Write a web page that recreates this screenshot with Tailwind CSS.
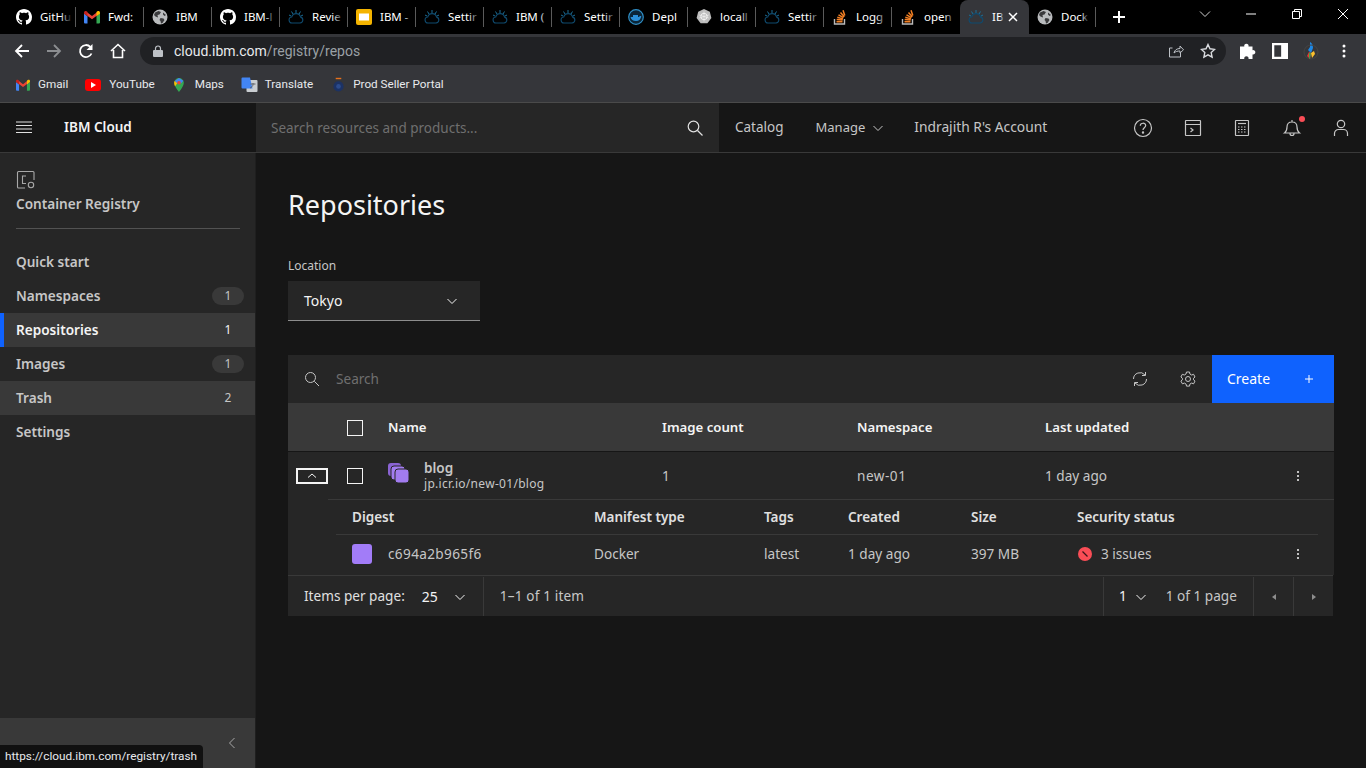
<!DOCTYPE html>
<html lang="en">
<head>
<meta charset="UTF-8">
<title>Repositories - IBM Cloud</title>
<script src="https://cdn.jsdelivr.net/npm/@tailwindcss/browser@4"></script>
</head>
<body class="bg-[#161616] overflow-hidden font-['Noto_Sans',sans-serif]">
<svg class="hidden" xmlns="http://www.w3.org/2000/svg">
  <symbol id="gh" viewBox="0 0 16 16"><path fill="#fff" d="M8 0C3.58 0 0 3.58 0 8c0 3.54 2.29 6.53 5.47 7.59.4.07.55-.17.55-.38 0-.19-.01-.82-.01-1.49-2.01.37-2.53-.49-2.69-.94-.09-.23-.48-.94-.82-1.13-.28-.15-.68-.52-.01-.53.63-.01 1.08.58 1.23.82.72 1.21 1.87.87 2.33.66.07-.52.28-.87.51-1.07-1.78-.2-3.64-.89-3.64-3.95 0-.87.31-1.59.82-2.15-.08-.2-.36-1.02.08-2.12 0 0 .67-.21 2.2.82.64-.18 1.32-.27 2-.27s1.36.09 2 .27c1.53-1.04 2.2-.82 2.2-.82.44 1.1.16 1.92.08 2.12.51.56.82 1.27.82 2.15 0 3.07-1.87 3.75-3.65 3.95.29.25.54.73.54 1.48 0 1.07-.01 1.93-.01 2.2 0 .21.15.46.55.38A8.01 8.01 0 0 0 16 8c0-4.42-3.58-8-8-8z"/></symbol>
  <symbol id="gm" viewBox="0 0 16 16"><path fill="#ea4335" d="M3 3.200 8 7l5-3.800v3.400L8 10.300 3 6.600z"/><path fill="#4285f4" d="M0 4v9.500a1 1 0 0 0 1 1h2.500V7.300L0 4.500z"/><path fill="#34a853" d="M16 4v9.500a1 1 0 0 1-1 1h-2.500V7.300L16 4.500z"/><path fill="#c5221f" d="M0 3.500c0-1.500 1.600-2 2.600-1.300L3.500 3v4.300L0 4.700z"/><path fill="#fbbc04" d="M16 3.500c0-1.500-1.600-2-2.600-1.300L12.500 3v4.300L16 4.700z"/></symbol>
  <symbol id="globe" viewBox="0 0 16 16"><circle cx="8" cy="8" r="7.500" fill="#b9bbbd"/><path fill="#3a3a3c" d="M3 3.500 6.500 2 9 3 7.500 5.500 5.500 6 6 8.500 3.500 7.500 2 6zM8.500 9l3 .5 1 1.500-2 3-1.500.5-.5-2.500-1-1zM11 3.500 14 6l-1.500 1L11 5.500z"/></symbol>
  <symbol id="cloud" viewBox="0 0 16 16"><path fill="none" stroke="#0f4a6e" stroke-width="1.100" d="M4.500 14h7.500a3 3 0 0 0 .6-5.900A4.600 4.600 0 0 0 3.700 8 3 3 0 0 0 4.500 14z"/><path stroke="#1c6f96" stroke-width="1" d="M8 1v3M3.500 2.500l1.500 2.500M12.500 2.500 11 5M1 6l2 1M15 6l-2 1"/></symbol>
  <symbol id="slides" viewBox="0 0 16 16"><rect width="16" height="16" rx="2" fill="#f4b400"/><rect x="3" y="4.500" width="10" height="7" fill="#fff"/></symbol>
  <symbol id="docker" viewBox="0 0 16 16"><circle cx="8" cy="8" r="7.300" fill="#0b2537" stroke="#2f8fc7" stroke-width="1.200"/><path d="M2.500 8h8.500c.4-1 1.300-1.200 2.300-1-.3 3-2.300 5-5.300 5-3 0-5-1.500-5.500-4z" fill="#2a8fd8"/><path d="M5 6h5v2H5z" fill="#2a8fd8"/></symbol>
  <symbol id="k8s" viewBox="0 0 16 16"><path fill="#bdbdbd" d="M8 0l5.800 2.800 1.600 6.300-4 5.100H4.600l-4-5.100 1.600-6.300z"/><circle cx="8" cy="7.500" r="3.200" fill="none" stroke="#f1f1f1" stroke-width="1"/><path stroke="#f1f1f1" stroke-width=".7" d="M8 2.500v10M3.300 6 12.700 9M12.700 6 3.300 9"/></symbol>
  <symbol id="so" viewBox="0 0 16 16"><path fill="none" stroke="#bcbbbb" stroke-width="1.400" d="M2.500 10v5h10v-5"/><path stroke="#f48024" stroke-width="1.500" d="M4.500 12.800h6M4.700 10.500l6 .6M5.300 8.200l5.700 1.700M6.500 5.800l5 2.900M8.500 3.500l3.800 4.300M11 1.200l1.800 5.300"/></symbol>
</svg>

<!-- tab strip -->
<div class="h-[34px] bg-black flex items-center pl-2 text-white text-[11.500px]">
  <div class="flex items-center w-[68px] h-5 pl-2 border-r border-[#5a5a5a]"><svg class="size-4 shrink-0"><use href="#gh"/></svg><span class="relative ml-2 w-[32px] whitespace-nowrap">GitHu<i class="absolute inset-y-0 right-0 w-3 bg-gradient-to-l from-black to-transparent"></i></span></div>
  <div class="flex items-center w-[68px] h-5 pl-2 border-r border-[#5a5a5a]"><svg class="size-4 shrink-0"><use href="#gm"/></svg><span class="relative ml-2 w-[32px] whitespace-nowrap">Fwd:<i class="absolute inset-y-0 right-0 w-2 bg-gradient-to-l from-black to-transparent"></i></span></div>
  <div class="flex items-center w-[68px] h-5 pl-2 border-r border-[#5a5a5a]"><svg class="size-4 shrink-0"><use href="#globe"/></svg><span class="ml-2 w-[32px] whitespace-nowrap">IBM</span></div>
  <div class="flex items-center w-[68px] h-5 pl-2 border-r border-[#5a5a5a]"><svg class="size-4 shrink-0"><use href="#gh"/></svg><span class="relative ml-2 w-[32px] whitespace-nowrap">IBM-l<i class="absolute inset-y-0 right-0 w-3 bg-gradient-to-l from-black to-transparent"></i></span></div>
  <div class="flex items-center w-[68px] h-5 pl-2 border-r border-[#5a5a5a]"><svg class="size-4 shrink-0"><use href="#cloud"/></svg><span class="relative ml-2 w-[32px] whitespace-nowrap">Revie<i class="absolute inset-y-0 right-0 w-3 bg-gradient-to-l from-black to-transparent"></i></span></div>
  <div class="flex items-center w-[68px] h-5 pl-2 border-r border-[#5a5a5a]"><svg class="size-4 shrink-0"><use href="#slides"/></svg><span class="relative ml-2 w-[32px] whitespace-nowrap">IBM -<i class="absolute inset-y-0 right-0 w-2 bg-gradient-to-l from-black to-transparent"></i></span></div>
  <div class="flex items-center w-[68px] h-5 pl-2 border-r border-[#5a5a5a]"><svg class="size-4 shrink-0"><use href="#cloud"/></svg><span class="relative ml-2 w-[32px] whitespace-nowrap">Settir<i class="absolute inset-y-0 right-0 w-3 bg-gradient-to-l from-black to-transparent"></i></span></div>
  <div class="flex items-center w-[68px] h-5 pl-2 border-r border-[#5a5a5a]"><svg class="size-4 shrink-0"><use href="#cloud"/></svg><span class="relative ml-2 w-[32px] whitespace-nowrap">IBM (<i class="absolute inset-y-0 right-0 w-2 bg-gradient-to-l from-black to-transparent"></i></span></div>
  <div class="flex items-center w-[68px] h-5 pl-2 border-r border-[#5a5a5a]"><svg class="size-4 shrink-0"><use href="#cloud"/></svg><span class="relative ml-2 w-[32px] whitespace-nowrap">Settir<i class="absolute inset-y-0 right-0 w-3 bg-gradient-to-l from-black to-transparent"></i></span></div>
  <div class="flex items-center w-[68px] h-5 pl-2 border-r border-[#5a5a5a]"><svg class="size-4 shrink-0"><use href="#docker"/></svg><span class="relative ml-2 w-[32px] whitespace-nowrap">Depl<i class="absolute inset-y-0 right-0 w-2 bg-gradient-to-l from-black to-transparent"></i></span></div>
  <div class="flex items-center w-[68px] h-5 pl-2 border-r border-[#5a5a5a]"><svg class="size-4 shrink-0"><use href="#k8s"/></svg><span class="relative ml-2 w-[32px] whitespace-nowrap">locall<i class="absolute inset-y-0 right-0 w-3 bg-gradient-to-l from-black to-transparent"></i></span></div>
  <div class="flex items-center w-[68px] h-5 pl-2 border-r border-[#5a5a5a]"><svg class="size-4 shrink-0"><use href="#cloud"/></svg><span class="relative ml-2 w-[32px] whitespace-nowrap">Settir<i class="absolute inset-y-0 right-0 w-3 bg-gradient-to-l from-black to-transparent"></i></span></div>
  <div class="flex items-center w-[68px] h-5 pl-2 border-r border-[#5a5a5a]"><svg class="size-4 shrink-0"><use href="#so"/></svg><span class="relative ml-2 w-[32px] whitespace-nowrap">Logg<i class="absolute inset-y-0 right-0 w-3 bg-gradient-to-l from-black to-transparent"></i></span></div>
  <div class="flex items-center w-[68px] h-5 pl-2"><svg class="size-4 shrink-0"><use href="#so"/></svg><span class="relative ml-2 w-[32px] whitespace-nowrap">open<i class="absolute inset-y-0 right-0 w-3 bg-gradient-to-l from-black to-transparent"></i></span></div>
  <div class="flex items-center self-end w-[69px] h-[34px] pl-2 bg-[#35363a] rounded-t-lg"><svg class="size-4 shrink-0"><use href="#cloud"/></svg><span class="relative ml-2 w-[12px] whitespace-nowrap">IB<i class="absolute inset-y-0 right-0 w-1 bg-gradient-to-l from-[#35363a] to-transparent"></i></span><svg class="size-2.5 ml-[4px]" viewBox="0 0 10 10"><path d="M1 1l8 8M9 1l-8 8" stroke="#fff" stroke-width="1.500"/></svg></div>
  <div class="flex items-center w-[67px] h-5 pl-2 border-r border-[#5a5a5a]"><svg class="size-4 shrink-0"><use href="#globe"/></svg><span class="relative ml-2 w-[28px] whitespace-nowrap">Dock<i class="absolute inset-y-0 right-0 w-2 bg-gradient-to-l from-black to-transparent"></i></span></div>
  <svg class="size-3 ml-[17px]" viewBox="0 0 12 12"><path d="M6 0v12M0 6h12" stroke="#fff" stroke-width="2"/></svg>
  <div class="ml-auto flex items-center h-full text-[#d0d0d0]">
    <svg class="size-3 mr-[35px] -mt-[6px]" viewBox="0 0 12 12"><path d="M1 3.500l5 5 5-5" fill="none" stroke="currentColor"/></svg>
    <svg class="size-[10px] mr-[36px] -mt-[6px]" viewBox="0 0 10 10"><path d="M0 5h10" stroke="#fff"/></svg>
    <svg class="size-[10px] mr-[36px] -mt-[6px]" viewBox="0 0 10 10"><path d="M.5 2.500h7v7h-7zM2.500 2.500v-2h7v7h-2" fill="none" stroke="#fff"/></svg>
    <svg class="size-[10px] mr-[18px] -mt-[6px]" viewBox="0 0 10 10"><path d="M0 0l10 10M10 0 0 10" stroke="#fff"/></svg>
  </div>
</div>

<!-- toolbar -->
<div class="h-[34px] bg-[#35363a] flex items-center text-white">
  <svg class="size-4 ml-[14px]" viewBox="0 0 16 16"><path d="M15 8H2M8 2 2 8l6 6" fill="none" stroke="#fff" stroke-width="1.800"/></svg>
  <svg class="size-4 ml-[16px]" viewBox="0 0 16 16"><path d="M1 8h13M8 2l6 6-6 6" fill="none" stroke="#8c8e91" stroke-width="1.800"/></svg>
  <svg class="size-4 ml-[16px]" viewBox="0 0 16 16"><path d="M13.500 10.500A6 6 0 1 1 12.300 3.800" fill="none" stroke="#fff" stroke-width="1.800"/><path d="M14.500 1v6h-6z" fill="#fff"/></svg>
  <svg class="size-4 ml-[16px]" viewBox="0 0 16 16"><path d="M1 8l7-6.500L15 8M3.500 7v7.500h9V7" fill="none" stroke="#fff" stroke-width="1.600"/></svg>
  <div class="ml-[14px] w-[1086px] h-7 rounded-full bg-[#202124] flex items-center pl-[13px] pr-[10px] text-[14px] font-['Roboto',sans-serif]">
    <svg class="size-[10px] h-3" viewBox="0 0 10 12"><path d="M2.500 5V3.500a2.500 2.500 0 0 1 5 0V5" fill="none" stroke="#bdc1c6" stroke-width="1.200"/><rect y="5" width="10" height="7" rx="1" fill="#bdc1c6"/></svg>
    <span class="ml-[11px] pt-px text-[#e8eaed]">cloud.ibm.com</span><span class="pt-px text-[#9aa0a6]">/registry/repos</span>
    <svg class="size-4 ml-auto" viewBox="0 0 16 16"><path d="M12.500 10v4h-11V5h3M6 10c.5-3 3-4.500 6-4.500V3l3.500 3.800L12 10V8C9.500 8 7.500 8.500 6 10z" fill="none" stroke="#bdc1c6" stroke-width="1"/></svg>
    <svg class="size-4 ml-[16px]" viewBox="0 0 16 16"><path d="M8 1.500l2 4.300 4.600.6-3.400 3.200.9 4.600L8 11.900l-4.100 2.300.9-4.600L1.400 6.400 6 5.800z" fill="none" stroke="#dadce0" stroke-width="1.400"/></svg>
  </div>
  <svg class="size-4 ml-[14px]" viewBox="0 0 16 16"><path fill="#fff" d="M0 3.500h4.300a2.200 2.200 0 1 1 4.200 0H12.500v3.700a2.200 2.200 0 1 1 0 4.200V16H8.500a2.200 2.200 0 1 0-4.200 0H0z"/></svg>
  <svg class="size-4 ml-[16px]" viewBox="0 0 14 14"><path d="M0 0h14v14H0zM2 2v10h6V2z" fill="#fff" fill-rule="evenodd"/></svg>
  <svg class="size-5 ml-[13px]" viewBox="0 0 20 20"><path d="M9 1c2 1 3 3 3 6l-2 5-3-3 2-3z" fill="#1e88e5"/><circle cx="10" cy="11" r="7" fill="none" stroke="#444" stroke-width="1"/><path d="M6 15l2-4 2 1-1 6z" fill="#e53935"/><path d="M10 12l3-2 1 3-3 4z" fill="#fbc02d"/><path d="M8 12l2 0-1 6-1-1z" fill="#43a047"/></svg>
  <svg class="w-1 h-[14px] ml-[21px]" viewBox="0 0 4 14"><circle cx="2" cy="2" r="1.500" fill="#fff"/><circle cx="2" cy="7" r="1.500" fill="#fff"/><circle cx="2" cy="12" r="1.500" fill="#fff"/></svg>
</div>

<!-- bookmarks -->
<div class="h-[34px] bg-[#35363a] flex items-center text-[11.700px] text-[#e8eaed] pl-4 font-['Roboto',sans-serif]">
  <svg class="size-[14px]"><use href="#gm"/></svg><span class="ml-2">Gmail</span>
  <svg class="ml-[17px] w-4 h-3" viewBox="0 0 16 12"><rect width="16" height="12" rx="3" fill="#f00"/><path d="M6 3l5 3-5 3z" fill="#fff"/></svg><span class="ml-2">YouTube</span>
  <svg class="ml-[17px] w-[14px] h-4" viewBox="0 0 16 16"><path d="M8 0a5.500 5.500 0 0 0-5.500 5.500C2.500 9.500 8 16 8 16s5.500-6.500 5.500-10.500A5.500 5.500 0 0 0 8 0z" fill="#34a853"/><path d="M3 3.500 8 0l5 3-2.500 3h-5z" fill="#4285f4"/><path d="M3 3.500 6 6 3.500 9.500C2.500 7.500 2 5 3 3.500z" fill="#fbbc04"/><circle cx="8" cy="5.500" r="2" fill="#ea4335"/></svg><span class="ml-[9px]">Maps</span>
  <svg class="ml-[17px] w-[17px] h-4" viewBox="0 0 16 16"><rect x="5" y="3" width="11" height="12" rx="1" fill="#c9cdd1"/><path d="M0 1.500A1 1 0 0 1 1 .5h7.500l2.500 11H1a1 1 0 0 1-1-1z" fill="#4285f4"/><path d="M9 7h5M11.500 6v1.500c0 1.500-1.500 3-3 3.500" stroke="#5f6368" fill="none"/></svg><span class="ml-[7px]">Translate</span>
  <svg class="ml-[19px] w-[13px] h-4" viewBox="0 0 14 16"><path d="M4 1h6" stroke="#e8711c" stroke-width="1.500"/><circle cx="7" cy="9.500" r="5.500" fill="#1c3264"/><circle cx="7" cy="9.500" r="2.500" fill="#2c4b8c"/></svg><span class="ml-2">Prod Seller Portal</span>
</div>

<!-- IBM Cloud header -->
<div class="h-[51px] bg-[#161616] border-t border-t-[#4a4a4a] border-b border-b-[#393939] flex text-[14px] text-[#c6c6c6]">
  <div class="w-[256px] flex items-center pl-4">
    <svg class="w-4 h-[13px]" viewBox="0 0 16 13"><path d="M0 1h16M0 4.500h16M0 8h16M0 11.500h16" stroke="#e0e0e0" stroke-width="1.200"/></svg>
    <span class="ml-8 font-semibold text-[13.500px] text-[#f4f4f4]">IBM Cloud</span>
  </div>
  <div class="w-[463px] bg-[#262626] flex items-center pl-[15px] pr-4 pt-px text-[13.500px] text-[#6f6f6f]">
    Search resources and products...
    <svg class="size-4 ml-auto" viewBox="0 0 16 16"><circle cx="6.500" cy="6.500" r="5.300" fill="none" stroke="#e0e0e0" stroke-width="1.200"/><path d="M10.500 10.500l5 5" stroke="#e0e0e0" stroke-width="1.200"/></svg>
  </div>
  <div class="flex items-center">
    <span class="ml-4 text-[13.500px]">Catalog</span>
    <span class="ml-8 text-[13px]">Manage</span>
    <svg class="size-3 ml-[7px]" viewBox="0 0 12 12"><path d="M1.500 4l4.500 4.500L10.500 4" fill="none" stroke="#c6c6c6"/></svg>
    <span class="ml-[30px] text-[13.800px]">Indrajith R's Account</span>
  </div>
  <div class="ml-auto flex items-center pr-[15px] gap-[29.500px] text-[#c6c6c6]">
    <svg class="size-5" viewBox="0 0 20 20" fill="none" stroke="currentColor" stroke-width="1.200"><circle cx="10" cy="10" r="8.500"/><path d="M7.300 7.800c0-3.400 5.400-3.400 5.400-.2 0 2.200-2.700 2.200-2.700 4.400"/><circle cx="10" cy="14.500" r=".6" fill="currentColor"/></svg>
    <svg class="size-5" viewBox="0 0 20 20" fill="none" stroke="currentColor" stroke-width="1.200"><rect x="2.500" y="2.500" width="15" height="15" rx=".5"/><path d="M2.500 6.500h15M7.500 10l2.500 2-2.500 2"/></svg>
    <svg class="size-5" viewBox="0 0 20 20" fill="none" stroke="currentColor" stroke-width="1.200"><rect x="3.500" y="2.500" width="13" height="15" rx=".5"/><path d="M6 5.500h8"/><path stroke-dasharray="1.500 1.500" d="M6 9h8M6 11.500h8M6 14h8"/></svg>
    <span class="relative size-5"><svg class="size-5" viewBox="0 0 20 20" fill="none" stroke="currentColor" stroke-width="1.200"><path d="M2.500 15c2-1.500 2.500-2.500 2.500-6 0-3 2-5 5-5s5 2 5 5c0 3.500.5 4.500 2.500 6zM10 2v2M8 15v.5a2 2 0 0 0 4 0V15"/></svg><i class="absolute -top-[2px] right-[-3px] size-1.5 rounded-full bg-[#fa4d56]"></i></span>
    <svg class="size-5" viewBox="0 0 20 20" fill="none" stroke="currentColor" stroke-width="1.200"><circle cx="10" cy="6" r="3.700"/><path d="M3.500 18v-2.500a4 4 0 0 1 4-4h5a4 4 0 0 1 4 4V18"/></svg>
  </div>
</div>

<div class="relative flex h-[615px]">
  <!-- side nav -->
  <aside class="w-[256px] shrink-0 bg-[#262626] flex flex-col border-r border-[#1f1f1f] text-[13.600px] text-[#c6c6c6] font-semibold">
    <div class="px-4 pt-[17px]">
      <svg class="size-5" viewBox="0 0 20 20" fill="none" stroke="#a8a8a8" stroke-width="1.100"><path d="M9 18H2.500a1 1 0 0 1-1-1V2.500a1 1 0 0 1 1-1H17a1 1 0 0 1 1 1V10"/><path d="M10 6H6.500v7.500H10"/><circle cx="15" cy="15" r="2.700"/></svg>
      <p class="mt-[4px]">Container Registry</p>
      <div class="mt-[14px] h-px w-[224px] bg-[#525252]"></div>
    </div>
    <nav class="mt-4 flex flex-col">
      <a class="h-[34px] flex items-center pl-4 pr-[11px]">Quick start</a>
      <a class="h-[34px] flex items-center pl-4 pr-[11px]">Namespaces<span class="ml-auto w-8 h-[18px] rounded-full bg-[#393939] text-[12px] font-normal flex items-center justify-center">1</span></a>
      <a class="h-[34px] flex items-center pl-3 pr-[11px] border-l-4 border-[#0f62fe] bg-[#393939] text-[#f4f4f4]">Repositories<span class="ml-auto w-8 text-[12px] font-normal flex items-center justify-center">1</span></a>
      <a class="h-[34px] flex items-center pl-4 pr-[11px]">Images<span class="ml-auto w-8 h-[18px] rounded-full bg-[#393939] text-[12px] font-normal flex items-center justify-center">1</span></a>
      <a class="h-[34px] flex items-center pl-4 pr-[11px] bg-[#393939]">Trash<span class="ml-auto w-8 text-[12px] font-normal flex items-center justify-center">2</span></a>
      <a class="h-[34px] flex items-center pl-4 pr-[11px]">Settings</a>
    </nav>
    <div class="mt-auto h-[50px] bg-[#393939] flex items-center justify-end pr-[17px]">
      <svg class="size-3" viewBox="0 0 12 12"><path d="M8.500 1 3.500 6l5 5" fill="none" stroke="#a8a8a8"/></svg>
    </div>
  </aside>

  <!-- main -->
  <main class="flex-1 px-8 pt-[34px] text-[#c6c6c6] text-[13.600px]">
    <h1 class="text-[27px] leading-9 text-[#f4f4f4]">Repositories</h1>
    <label class="block mt-[35px] text-[12px] leading-4">Location</label>
    <div class="mt-[7px] w-[192px] h-10 bg-[#262626] border-b border-[#8d8d8d] flex items-center px-4 text-[14px] text-[#f4f4f4]">Tokyo
      <svg class="size-3 ml-auto mr-[6px]" viewBox="0 0 12 12"><path d="M1.500 4l4.500 4.500L10.500 4" fill="none" stroke="#f4f4f4"/></svg>
    </div>

    <div class="mt-[34px] w-[1046px]">
      <div class="h-12 bg-[#262626] flex items-center">
        <svg class="size-4 ml-4" viewBox="0 0 16 16"><circle cx="6.500" cy="6.500" r="5" fill="none" stroke="#c6c6c6"/><path d="M10.300 10.300l4.700 4.700" stroke="#c6c6c6"/></svg>
        <span class="ml-4 text-[#6f6f6f]">Search</span>
        <svg class="size-4 ml-auto" viewBox="0 0 16 16" fill="none" stroke="#c6c6c6"><path d="M14.500 8a6.500 6.500 0 0 1-11.500 4M1.500 8A6.500 6.500 0 0 1 13 4"/><path d="M13.500 1v3.500H10M2.500 15v-3.500H6"/></svg>
        <svg class="size-4 ml-8 mr-4" viewBox="0 0 16 16" fill="none" stroke="#c6c6c6"><path d="M6.500 1h3l.4 2 1.700 1 2-.7 1.400 2.700-1.500 1.300v1.500l1.500 1.300-1.400 2.700-2-.7-1.700 1-.4 2h-3l-.4-2-1.700-1-2 .7L.9 10.100l1.500-1.300V7.300L.9 6l1.400-2.700 2 .7 1.700-1z"/><circle cx="8" cy="8" r="2.500"/></svg>
        <div class="w-[122px] h-12 pb-px bg-[#0f62fe] text-white text-[14px] flex items-center pl-[15px]">Create
          <svg class="size-2 ml-auto mr-[21px]" viewBox="0 0 8 8"><path d="M4 0v8M0 4h8" stroke="#fff"/></svg>
        </div>
      </div>
      <div class="h-[48px] pt-px bg-[#393939] grid grid-cols-[100px_274px_195px_188px_1fr] items-center font-semibold text-[13.200px] text-[#f4f4f4]">
        <span class="size-4 ml-[59px] border border-[#f4f4f4]"></span><span>Name</span><span>Image count</span><span>Namespace</span><span>Last updated</span>
      </div>
      <div class="h-[47px] pt-px mt-px bg-[#262626] grid grid-cols-[100px_36px_238px_195px_188px_1fr_auto] items-center">
        <div class="flex items-center">
          <span class="w-8 h-4 ml-2 border-2 border-[#f4f4f4] flex items-center justify-center"><svg class="size-3" viewBox="0 0 12 12"><path d="M2 7.500 6 4l4 3.500" fill="none" stroke="#f4f4f4"/></svg></span>
          <span class="size-4 ml-[19px] border border-[#f4f4f4]"></span>
        </div>
        <svg class="size-[21px] -mt-[6px]" viewBox="0 0 21 21"><rect x="0" y="0" width="13" height="13" rx="3" fill="#8a63d2"/><rect x="3" y="3" width="14" height="14" rx="3" fill="#a27cf0" stroke="#262626"/><rect x="7" y="6" width="14" height="14" rx="3" fill="#a27cf0" stroke="#262626"/></svg>
        <div class="leading-4"><p class="font-semibold">blog</p><p class="text-[12px] tracking-[0.3px]">jp.icr.io/new-01/blog</p></div>
        <span>1</span><span class="tracking-[0.5px]">new-01</span><span>1 day ago</span>
        <svg class="w-1 h-3 mr-[34px]" viewBox="0 0 4 12"><circle cx="2" cy="2" r="1" fill="#f4f4f4"/><circle cx="2" cy="6" r="1" fill="#f4f4f4"/><circle cx="2" cy="10" r="1" fill="#f4f4f4"/></svg>
      </div>
      <div class="bg-[#262626] pl-[40px]">
        <div class="border-t border-[#393939] pl-[24px] h-[35px] pt-px grid grid-cols-[242px_170px_84px_123px_106px_1fr] items-center font-semibold text-[13.500px] text-[#e0e0e0]">
          <span>Digest</span><span>Manifest type</span><span>Tags</span><span>Created</span><span>Size</span><span>Security status</span>
        </div>
        <div class="ml-2 mr-4 border-t border-[#393939] pl-4 pb-[2px] h-[41px] grid grid-cols-[36px_206px_170px_84px_123px_106px_1fr_auto] items-center">
          <span class="size-5 rounded-[3px] bg-[#a27cf8]"></span><span class="tracking-[0.35px]">c694a2b965f6</span><span>Docker</span><span>latest</span><span>1 day ago</span><span>397 MB</span>
          <span class="flex items-center"><svg class="size-[14px] ml-px mr-[9px]" viewBox="0 0 14 14"><circle cx="7" cy="7" r="7" fill="#fa4d56"/><path d="M4.500 4.500l5 5" stroke="#3a1518" stroke-width="1.200"/></svg>3 issues</span>
          <svg class="w-1 h-3 mr-[18px]" viewBox="0 0 4 12"><circle cx="2" cy="2" r="1" fill="#f4f4f4"/><circle cx="2" cy="6" r="1" fill="#f4f4f4"/><circle cx="2" cy="10" r="1" fill="#f4f4f4"/></svg>
        </div>
      </div>
      <div class="h-[41px] pt-px bg-[#262626] border-t border-[#393939] flex items-center w-[1045px]">
        <span class="ml-4 text-[#e0e0e0]">Items per page:</span>
        <span class="ml-[17px] text-[14px] text-[#f4f4f4]">25</span>
        <svg class="size-3 ml-4" viewBox="0 0 12 12"><path d="M1.500 4l4.500 4.500L10.500 4" fill="none" stroke="#f4f4f4"/></svg>
        <span class="ml-[17px] h-full border-l border-[#393939] pl-4 flex items-center tracking-[0.15px]">1–1 of 1 item</span>
        <div class="ml-auto flex items-center h-full">
          <span class="h-full w-[150px] border-l border-[#393939] pl-[15px] flex items-center"><span class="text-[#f4f4f4]">1</span><svg class="size-3 ml-2" viewBox="0 0 12 12"><path d="M1.500 4l4.500 4.500L10.500 4" fill="none" stroke="#f4f4f4"/></svg><span class="ml-[19px]">1 of 1 page</span></span>
          <span class="h-full w-10 border-l border-[#393939] flex items-center justify-center"><svg class="size-2" viewBox="0 0 8 8"><path d="M6 1v6L2 4z" fill="#8d8d8d"/></svg></span>
          <span class="h-full w-10 border-l border-[#393939] flex items-center justify-center"><svg class="size-2" viewBox="0 0 8 8"><path d="M2 1v6l4-3z" fill="#8d8d8d"/></svg></span>
        </div>
      </div>
    </div>
  </main>

  <!-- link preview, sits over the page like Chrome's status bubble -->
  <div class="absolute left-0 bottom-0 h-[23px] w-[203px] bg-[#111] rounded-tr-sm flex items-center pl-[5px] text-[11.800px] text-[#e8eaed] whitespace-nowrap font-['Roboto',sans-serif]">https://cloud.ibm.com/registry/trash</div>
</div>
</body>
</html>
